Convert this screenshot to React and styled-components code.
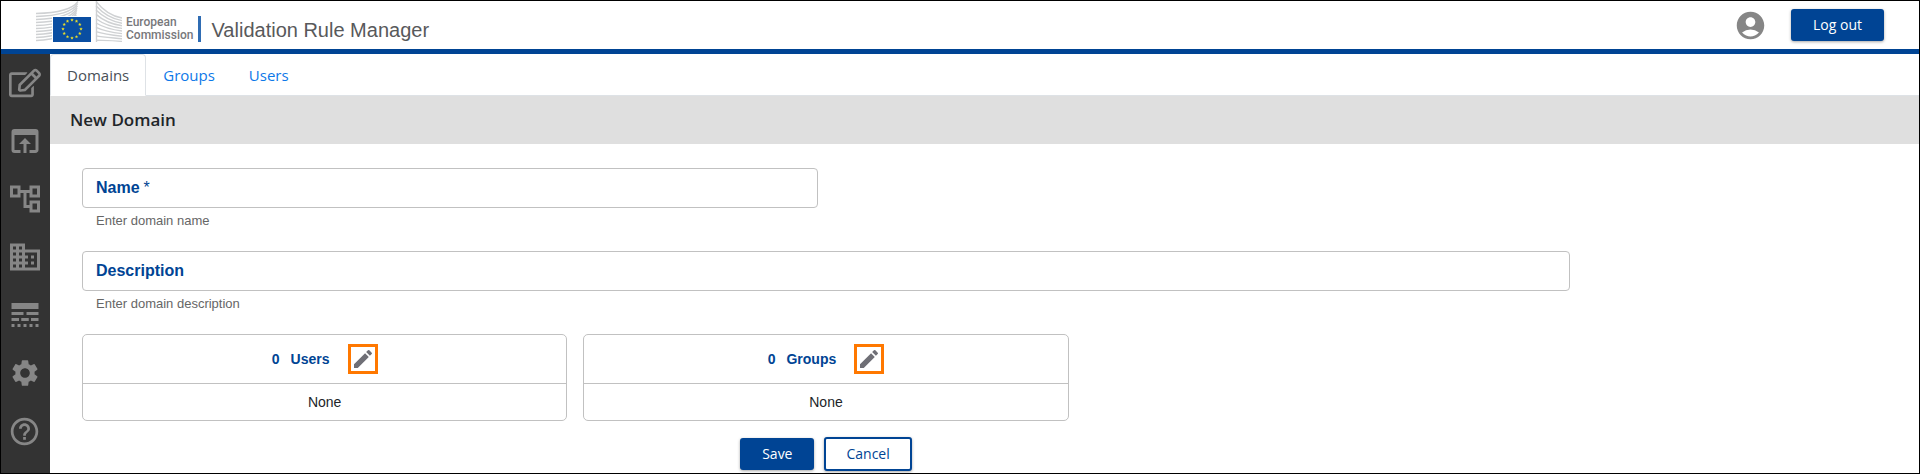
import React from "react";
import styled, { createGlobalStyle } from "styled-components";
import { FaRegEdit } from "react-icons/fa";
import {
  MdOpenInBrowser,
  MdOutlineAccountTree,
  MdBusiness,
  MdLineStyle,
  MdSettings,
  MdHelpOutline,
  MdAccountCircle,
  MdEdit,
} from "react-icons/md";

const blue = "#004494";
const outline = "#c1c1c1";
const humanist = `"Segoe UI", "Open Sans", "Noto Sans", sans-serif`;
const grotesque = `"Liberation Sans", Arial, sans-serif`;

const GlobalStyle = createGlobalStyle`
  *, *::before, *::after { box-sizing: border-box; }
  body { margin: 0; background: #fff; color: #212529; font-family: ${grotesque}; }
  button, input { font: inherit; }
`;

const Page = styled.div`
  display: flex;
  flex-direction: column;
  min-height: 100vh;
  border: 1px solid #000;
`;

const Header = styled.header`
  display: flex;
  align-items: center;
  height: 53px;
  padding: 0 35px;
  border-bottom: 5px solid ${blue};
`;

const Brand = styled.a`
  display: flex;
  align-items: flex-end;
  height: 48px;
  padding-bottom: 7px;
  text-decoration: none;
`;

const BrandName = styled.span`
  display: flex;
  flex-direction: column;
  padding: 0 4px;
  border-right: 3px solid #2f6cb3;
  color: #77787b;
  font: 500 12px/13px Roboto, sans-serif;
`;

const AppTitle = styled.h1`
  flex: 1;
  margin: 0;
  padding: 10px 0 0 11px;
  color: #58595b;
  font-size: 20px;
  line-height: 24px;
  font-weight: 400;
`;

const Account = styled.button`
  display: flex;
  margin-right: 24px;
  padding: 0;
  border: 0;
  background: none;
  color: #868686;
`;

const Button = styled.button`
  height: ${(p) => (p.$outlined ? 34 : 32)}px;
  padding: 0 ${(p) => (p.$outlined ? 20 : 22)}px;
  border: ${(p) => (p.$outlined ? `2px solid ${blue}` : 0)};
  border-radius: 3px;
  background: ${(p) => (p.$outlined ? "#fff" : blue)};
  color: ${(p) => (p.$outlined ? blue : "#fff")};
  font: 400 14px/20px ${humanist};
  box-shadow: 0 1px 3px rgba(0, 0, 0, 0.35);
`;

const Body = styled.div`
  display: flex;
  flex: 1;
`;

const Sidebar = styled.nav`
  display: flex;
  flex-direction: column;
  align-items: center;
  gap: 22px;
  width: 49px;
  padding: 11px 2px 0 0;
  background: #333;
`;

const SideLink = styled.a`
  display: flex;
  align-items: center;
  justify-content: center;
  width: 36px;
  height: 36px;
  color: #868686;
`;

const Main = styled.main`
  flex: 1;
  min-width: 0;
`;

const Tabs = styled.nav`
  display: flex;
  height: 42px;
  border-bottom: 1px solid #dee2e6;
`;

const Tab = styled.a`
  height: 42px;
  padding: 0 16px;
  border: 1px solid ${(p) => (p.$active ? "#dee2e6" : "transparent")};
  border-bottom-color: ${(p) => (p.$active ? "#fff" : "transparent")};
  border-radius: 4px 4px 0 0;
  color: ${(p) => (p.$active ? "#495057" : "#0d78e8")};
  font: 400 15px/40px ${humanist};
  text-decoration: none;
`;

const PageTitle = styled.h2`
  margin: 0;
  padding: 0 20px;
  background: #dfdfdf;
  font: 600 17px/48px ${humanist};
`;

const FormArea = styled.div`
  padding: 24px 0 2px 32px;
`;

const Form = styled.form`
  display: grid;
  grid-template-columns: repeat(12, minmax(0, 1fr));
  gap: 16px;
  width: 81%;
`;

const Field = styled.div`
  grid-column: span ${(p) => p.$span};
`;

const FieldBox = styled.div`
  display: flex;
  align-items: center;
  height: 40px;
  padding: 0 13px;
  border: 1px solid ${outline};
  border-radius: 4px;
`;

const Label = styled.label`
  color: ${blue};
  font-size: 16px;
  line-height: 20px;
  font-weight: 700;
`;

const Required = styled.span`
  padding-left: 4px;
  font-weight: 400;
`;

const Input = styled.input`
  flex: 1;
  min-width: 0;
  height: 100%;
  padding: 0 8px;
  border: 0;
  outline: 0;
  background: none;
`;

const Hint = styled.div`
  padding: 4px 14px 6px;
  color: #666;
  font-size: 13px;
  line-height: 17px;
`;

const Card = styled.section`
  grid-column: span 4;
  border: 1px solid ${outline};
  border-radius: 5px;
  font-size: 14px;
`;

const CardHeader = styled.header`
  display: flex;
  align-items: center;
  justify-content: center;
  height: 49px;
  border-bottom: 1px solid ${outline};
  color: ${blue};
  font-weight: 700;
`;

const CardTitle = styled.h3`
  margin: 0 18px 0 11px;
  font-size: 14px;
`;

const EditButton = styled.button`
  display: flex;
  align-items: center;
  justify-content: center;
  width: 30px;
  height: 30px;
  padding: 0;
  border: 3px solid #ff7800;
  background: #fff;
  color: #6f6f76;
`;

const CardBody = styled.div`
  line-height: 36px;
  text-align: center;
`;

const Actions = styled.div`
  grid-column: 1 / -1;
  display: flex;
  align-items: center;
  justify-content: center;
  gap: 10px;
`;

const lineSteps = [0, 1, 2, 3, 4, 5, 6, 7, 8, 9];
const stars = Array.from({ length: 12 }, (_, i) => (i * Math.PI) / 6);

function Star({ angle }) {
  const cx = 36 + 9 * Math.sin(angle);
  const cy = 28 - 9 * Math.cos(angle);
  const points = Array.from({ length: 10 }, (_, k) => {
    const r = k % 2 ? 0.8 : 1.8;
    const a = (k * Math.PI) / 5;
    return `${(cx + r * Math.sin(a)).toFixed(2)},${(cy - r * Math.cos(a)).toFixed(2)}`;
  }).join(" ");
  return <polygon points={points} fill="#e9dd2a" />;
}

function CommissionLogo() {
  return (
    <svg width="86" height="41" viewBox="0 0 86 41" aria-hidden="true">
      <g fill="none" stroke="#cfd1d3" strokeWidth="1.4">
        {lineSteps.map((i) => (
          <path
            key={i}
            d={`M0 ${12.5 + i * 3} C20 ${12 + i * 3} 36 ${9 + i * 2.6} ${42 - i * 0.3} ${0.5 + i * 2.2}`}
          />
        ))}
        {lineSteps.map((i) => (
          <path
            key={i}
            d={`M60 ${0.5 + i * 4.3} C66 ${8 + i * 3.5} 74 ${15 + i * 2.7} 86 ${17 + i * 2.6}`}
          />
        ))}
        <path d="M60.5 0 V41" />
      </g>
      <rect x="16" y="15" width="39" height="26" fill="#fff" />
      <rect x="17" y="16" width="38" height="25" fill="#0a4ea2" />
      {stars.map((a) => (
        <Star key={a} angle={a} />
      ))}
    </svg>
  );
}

const sideItems = [
  ["Edit", FaRegEdit, 32],
  ["Import", MdOpenInBrowser, 36],
  ["Structure", MdOutlineAccountTree, 36],
  ["Organisations", MdBusiness, 36],
  ["Rules", MdLineStyle, 36],
  ["Settings", MdSettings, 32],
  ["Help", MdHelpOutline, 33],
];

function TextField({ id, label, hint, span, required }) {
  return (
    <Field $span={span}>
      <FieldBox>
        <Label htmlFor={id}>
          {label}
          {required && <Required>*</Required>}
        </Label>
        <Input id={id} type="text" required={required} aria-describedby={`${id}-hint`} />
      </FieldBox>
      <Hint id={`${id}-hint`}>{hint}</Hint>
    </Field>
  );
}

function MemberCard({ title }) {
  return (
    <Card>
      <CardHeader>
        <span>0</span>
        <CardTitle>{title}</CardTitle>
        <EditButton type="button" aria-label={`Edit ${title}`}>
          <MdEdit size={24} />
        </EditButton>
      </CardHeader>
      <CardBody>None</CardBody>
    </Card>
  );
}

export default function App() {
  return (
    <Page>
      <GlobalStyle />
      <Header>
        <Brand href="#home">
          <CommissionLogo />
          <BrandName>
            <span>European</span>
            <span>Commission</span>
          </BrandName>
        </Brand>
        <AppTitle>Validation Rule Manager</AppTitle>
        <Account type="button" aria-label="Account">
          <MdAccountCircle size={33} />
        </Account>
        <Button type="button">Log out</Button>
      </Header>
      <Body>
        <Sidebar aria-label="Sections">
          {sideItems.map(([name, Icon, size]) => (
            <SideLink key={name} href={`#${name.toLowerCase()}`} aria-label={name}>
              <Icon size={size} />
            </SideLink>
          ))}
        </Sidebar>
        <Main>
          <Tabs aria-label="Administration">
            <Tab href="#domains" $active aria-current="page">
              Domains
            </Tab>
            <Tab href="#groups">Groups</Tab>
            <Tab href="#users">Users</Tab>
          </Tabs>
          <PageTitle>New Domain</PageTitle>
          <FormArea>
            <Form>
              <TextField id="name" label="Name" hint="Enter domain name" span={6} required />
              <TextField id="description" label="Description" hint="Enter domain description" span={12} />
              <MemberCard title="Users" />
              <MemberCard title="Groups" />
              <Actions>
                <Button type="submit">Save</Button>
                <Button type="button" $outlined>
                  Cancel
                </Button>
              </Actions>
            </Form>
          </FormArea>
        </Main>
      </Body>
    </Page>
  );
}
